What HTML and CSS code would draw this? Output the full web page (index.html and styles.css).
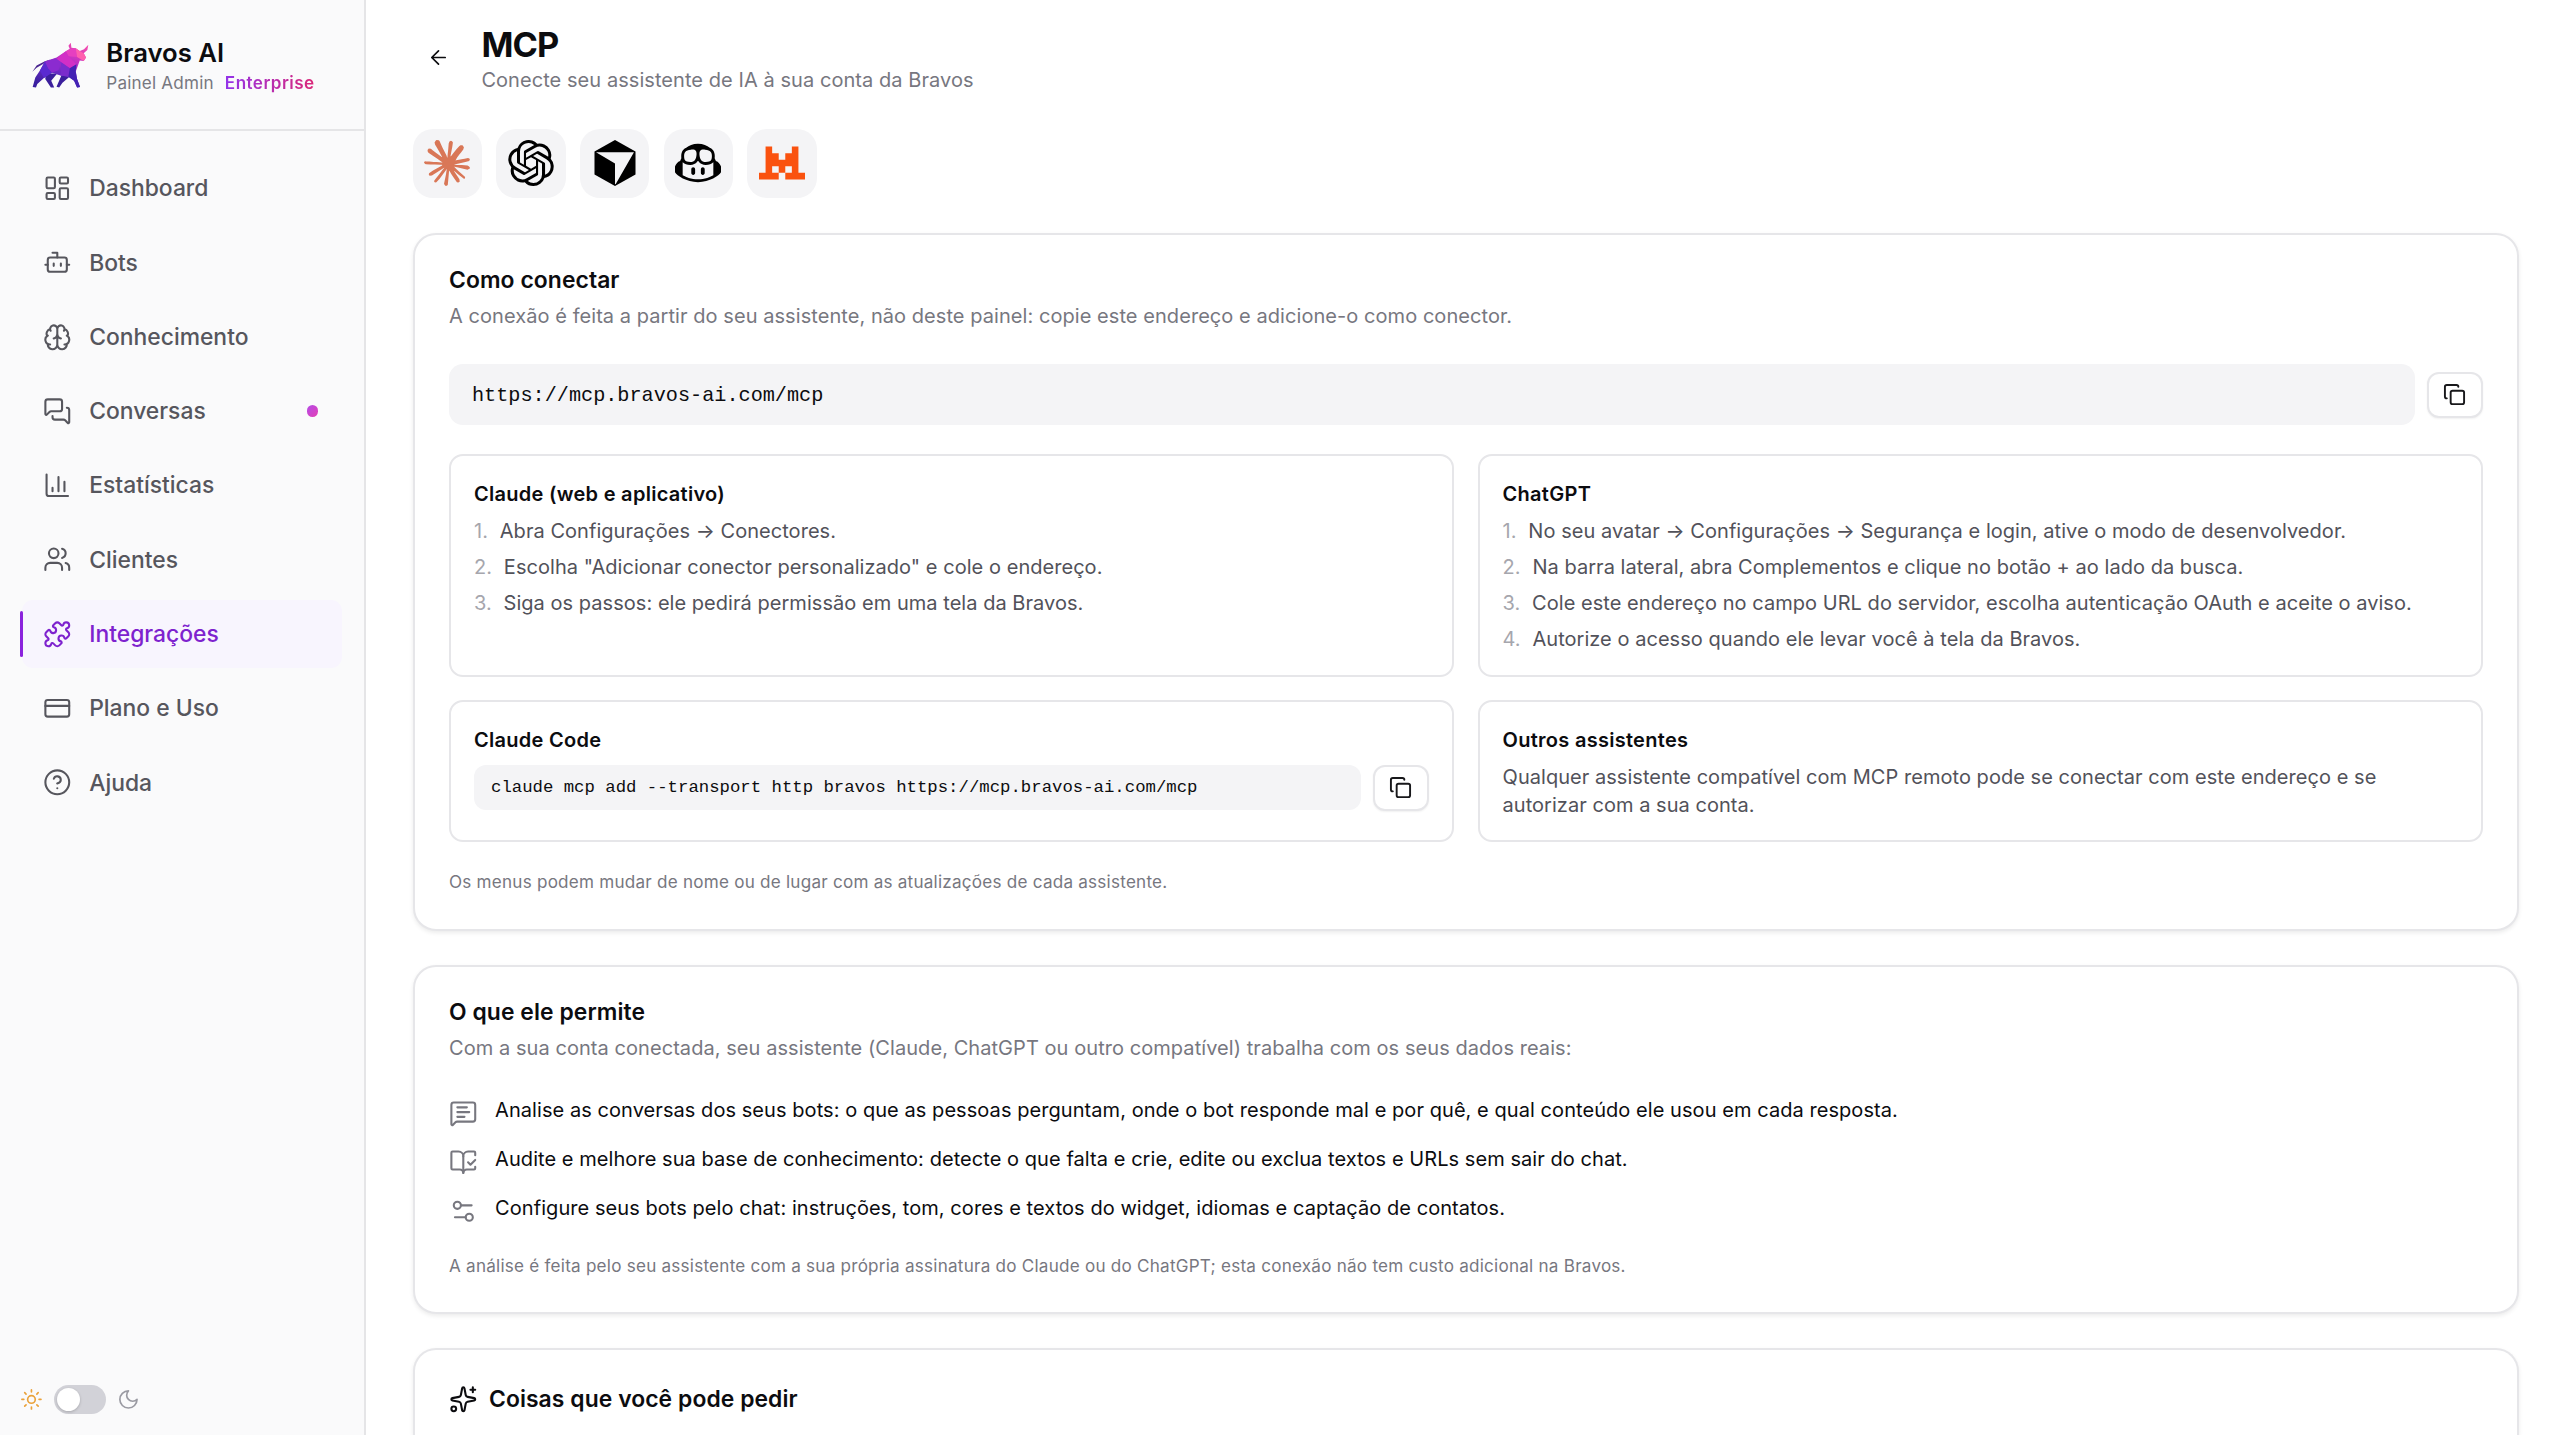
FILE: index.html
```html
<!DOCTYPE html>
<html lang="pt-BR">
<head>
<meta charset="utf-8">
<title>Bravos AI – MCP</title>
<link rel="stylesheet" href="styles.css">
</head>
<body>
<svg class="defs" width="0" height="0" aria-hidden="true">
  <symbol id="copy" viewBox="0 0 24 24"><rect x="8" y="8" width="14" height="14" rx="2"/><path d="M4 16c-1.1 0-2-.9-2-2V4c0-1.1.9-2 2-2h10c1.1 0 2 .9 2 2"/></symbol>
</svg>
<aside class="sidebar">
  <div class="brand">
    <svg class="brand-logo" viewBox="36 33 172 140">
      <defs>
        <linearGradient id="bull" x1="0.75" y1="0" x2="0.3" y2="1"><stop offset="0" stop-color="#f24bb0"/><stop offset=".35" stop-color="#c030c4"/><stop offset=".65" stop-color="#6a2bc4"/><stop offset="1" stop-color="#3a1fa0"/></linearGradient>
      </defs>
      <path fill="#4a2590" d="M37 123 50 104 75 91 92 86 68 100 50 111z"/>
      <path fill="#3b1f9c" d="M78 128 76 145 93 170H103L94 150 112 128zM125 133 110 168 118 170 128 156 150 137z"/>
      <path fill="url(#bull)" d="M75 92 110 80 138 61 150 54 146 44 153 35 155 50 168 52 180 60 193 55 206 41 203 57 192 67 199 80 192 90 180 89 176 100 168 122 172 145 181 169 172 170 163 150 146 138 122 134 96 126 72 142 52 160 48 170 38 169 46 140 58 122z"/>
      <path fill="#e63fc0" d="M138 61 150 54 168 52 172 78 146 76z"/>
      <path fill="#ff5fae" d="M168 52 180 60 192 67 199 80 192 90 172 78z"/>
      <path fill="#d22fc6" d="M138 61 146 76 170 100 150 112 124 94 108 86z"/>
      <path fill="#8b2bd0" d="M75 92 108 82 124 94 116 118 96 126 84 112z"/>
      <path fill="#5a2ad0" d="M75 92 84 112 96 126 72 142 60 120z"/>
      <path fill="#7a2ccc" d="M124 94 150 112 146 138 122 134z"/>
      <path fill="#4322b4" d="M150 112 170 100 168 122 172 145 181 169 172 170 163 150 146 138z"/>
    </svg>
    <div class="brand-text">
      <div class="brand-name">Bravos AI</div>
      <div class="brand-sub"><span>Painel Admin</span><span class="plan">Enterprise</span></div>
    </div>
  </div>
  <nav class="nav">
    <a class="item"><svg class="ico" viewBox="0 0 24 24"><rect width="7" height="9" x="3" y="3" rx="1"/><rect width="7" height="5" x="14" y="3" rx="1"/><rect width="7" height="9" x="14" y="12" rx="1"/><rect width="7" height="5" x="3" y="16" rx="1"/></svg><span>Dashboard</span></a>
    <a class="item"><svg class="ico" viewBox="0 0 24 24"><path d="M12 8V4H8"/><rect width="16" height="12" x="4" y="8" rx="2"/><path d="M2 14h2M20 14h2M15 13v2M9 13v2"/></svg><span>Bots</span></a>
    <a class="item"><svg class="ico" viewBox="0 0 24 24"><path d="M12 18V5M15 13a4.17 4.17 0 0 1-3-4 4.17 4.17 0 0 1-3 4M17.598 6.5A3 3 0 1 0 12 5a3 3 0 1 0-5.598 1.5M17.997 5.125a4 4 0 0 1 2.526 5.77M18 18a4 4 0 0 0 2-7.464M19.967 17.483A4 4 0 1 1 12 18a4 4 0 1 1-7.967-.517M6 18a4 4 0 0 1-2-7.464M6.003 5.125a4 4 0 0 0-2.526 5.77"/></svg><span>Conhecimento</span></a>
    <a class="item"><svg class="ico" viewBox="0 0 24 24"><path d="M16 10a2 2 0 0 1-2 2H6.828a2 2 0 0 0-1.414.586l-2.202 2.202A.71.71 0 0 1 2 14.286V4a2 2 0 0 1 2-2h10a2 2 0 0 1 2 2z"/><path d="M20 9a2 2 0 0 1 2 2v10.286a.71.71 0 0 1-1.212.502l-2.202-2.202A2 2 0 0 0 17.172 19H10a2 2 0 0 1-2-2v-1"/></svg><span>Conversas</span><i class="dot"></i></a>
    <a class="item"><svg class="ico" viewBox="0 0 24 24"><path d="M3 3v16a2 2 0 0 0 2 2h16M18 17V9M13 17V5M8 17v-3"/></svg><span>Estatísticas</span></a>
    <a class="item"><svg class="ico" viewBox="0 0 24 24"><path d="M16 21v-2a4 4 0 0 0-4-4H6a4 4 0 0 0-4 4v2M16 3.128a4 4 0 0 1 0 7.744M22 21v-2a4 4 0 0 0-3-3.87"/><circle cx="9" cy="7" r="4"/></svg><span>Clientes</span></a>
    <a class="item active"><svg class="ico" viewBox="0 0 24 24"><path d="M15.39 4.39a1 1 0 0 0 1.68-.474 2.5 2.5 0 1 1 3.014 3.015 1 1 0 0 0-.474 1.68l1.683 1.682a2.414 2.414 0 0 1 0 3.414L19.61 15.39a1 1 0 0 1-1.68-.474 2.5 2.5 0 1 0-3.014 3.015 1 1 0 0 1 .474 1.68l-1.683 1.682a2.414 2.414 0 0 1-3.414 0L8.61 19.61a1 1 0 0 0-1.68.474 2.5 2.5 0 1 1-3.014-3.015 1 1 0 0 0 .474-1.68l-1.683-1.682a2.414 2.414 0 0 1 0-3.414L4.39 8.61a1 1 0 0 1 1.68.474 2.5 2.5 0 1 0 3.014-3.015 1 1 0 0 1-.474-1.68l1.683-1.682a2.414 2.414 0 0 1 3.414 0z"/></svg><span>Integrações</span></a>
    <a class="item"><svg class="ico" viewBox="0 0 24 24"><rect width="20" height="14" x="2" y="5" rx="2"/><path d="M2 10h20"/></svg><span>Plano e Uso</span></a>
    <a class="item"><svg class="ico" viewBox="0 0 24 24"><circle cx="12" cy="12" r="10"/><path d="M9.09 9a3 3 0 0 1 5.83 1c0 2-3 3-3 3M12 17h.01"/></svg><span>Ajuda</span></a>
  </nav>
  <div class="theme">
    <svg class="ico sun" viewBox="0 0 24 24"><circle cx="12" cy="12" r="4"/><path d="M12 2v2M12 20v2M4.93 4.93l1.41 1.41M17.66 17.66l1.41 1.41M2 12h2M20 12h2M6.34 17.66l-1.41 1.41M19.07 4.93l-1.41 1.41"/></svg>
    <span class="switch"><i></i></span>
    <svg class="ico moon" viewBox="0 0 24 24"><path d="M12 3a6 6 0 0 0 9 9 9 9 0 1 1-9-9Z"/></svg>
  </div>
</aside>
<main class="main">
  <header class="head">
    <span class="back"><svg class="ico" viewBox="0 0 24 24"><path d="m12 19-7-7 7-7M19 12H5"/></svg></span>
    <div>
      <h1>MCP</h1>
      <p>Conecte seu assistente de IA à sua conta da Bravos</p>
    </div>
  </header>
  <div class="tiles">
    <span class="tile"><svg viewBox="0 0 24 24" fill="#d97757"><path d="m4.7144 15.9555 4.7174-2.6471.079-.2307-.079-.1275h-.2307l-.7893-.0486-2.6956-.0729-2.3375-.0971-2.2646-.1214-.5707-.1215-.5343-.7042.0546-.3522.4797-.3218.686.0608 1.5179.1032 2.2767.1578 1.6514.0972 2.4468.255h.3886l.0546-.1579-.1336-.0971-.1032-.0972L6.973 9.8356l-2.55-1.6879-1.3356-.9714-.7225-.4918-.3643-.4614-.1578-1.0078.6557-.7225.8803.0607.2246.0607.8925.686 1.9064 1.4754 2.4893 1.8336.3643.3035.1457-.1032.0182-.0728-.164-.2733-1.3539-2.4467-1.445-2.4893-.6435-1.032-.17-.6194c-.0607-.255-.1032-.4674-.1032-.7285L6.287.1335 6.6997 0l.9957.1336.419.3642.6192 1.4147 1.0018 2.2282 1.5543 3.0296.4553.8985.2429.8318.091.255h.1579v-.1457l.1275-1.706.2368-2.0947.2307-2.6957.0789-.7589.3764-.9107.7468-.4918.5828.2793.4797.686-.0668.4433-.2853 1.8517-.5586 2.9021-.3643 1.9429h.2125l.2429-.2429.9835-1.3053 1.6514-2.0643.7286-.8196.85-.9046.5464-.4311h1.0321l.759 1.1293-.34 1.1657-1.0625 1.3478-.8804 1.1414-1.2628 1.7-.7893 1.36.0729.1093.1882-.0183 2.8535-.607 1.5421-.2794 1.8396-.3157.8318.3886.091.3946-.3278.8075-1.967.4857-2.3072.4614-3.4364.8136-.0425.0304.0486.0607 1.5482.1457.6618.0364h1.621l3.0175.2247.7892.522.4736.6376-.079.4857-1.2142.6193-1.6393-.3886-3.825-.9107-1.3113-.3279h-.1822v.1093l1.0929 1.0686 2.0035 1.8092 2.5075 2.3314.1275.5768-.3218.4554-.34-.0486-2.2039-1.6575-.85-.7468-1.9246-1.621h-.1275v.17l.4432.6496 2.3436 3.5214.1214 1.0807-.17.3521-.6071.2125-.6679-.1214-1.3721-1.9246L14.38 17.959l-1.1414-1.9428-.1397.079-.674 7.2552-.3156.3703-.7286.2793-.6071-.4614-.3218-.7468.3218-1.4753.3886-1.9246.3157-1.53.2853-1.9004.17-.6314-.0121-.0425-.1397.0182-1.4328 1.9672-2.1796 2.9446-1.7243 1.8456-.4128.164-.7164-.3704.0667-.6618.4008-.5889 2.386-3.0357 1.4389-1.882.929-1.0868-.0062-.1579h-.0546l-6.3385 4.1164-1.1293.1457-.4857-.4554.0607-.7467.2307-.2429 1.9064-1.3114Z"/></svg></span>
    <span class="tile"><svg viewBox="0 0 24 24"><path d="M22.2819 9.8211a5.9847 5.9847 0 0 0-.5157-4.9108 6.0462 6.0462 0 0 0-6.5098-2.9A6.0651 6.0651 0 0 0 4.9807 4.1818a5.9847 5.9847 0 0 0-3.9977 2.9 6.0462 6.0462 0 0 0 .7427 7.0966 5.98 5.98 0 0 0 .511 4.9107 6.051 6.051 0 0 0 6.5146 2.9001A5.9847 5.9847 0 0 0 13.2599 24a6.0557 6.0557 0 0 0 5.7718-4.2058 5.9894 5.9894 0 0 0 3.9977-2.9001 6.0557 6.0557 0 0 0-.7475-7.0729zm-9.022 12.6081a4.4755 4.4755 0 0 1-2.8764-1.0408l.1419-.0804 4.7783-2.7582a.7948.7948 0 0 0 .3927-.6813v-6.7369l2.02 1.1686a.071.071 0 0 1 .038.052v5.5826a4.504 4.504 0 0 1-4.4945 4.4944zm-9.6607-4.1254a4.4708 4.4708 0 0 1-.5346-3.0137l.142.0852 4.783 2.7582a.7712.7712 0 0 0 .7806 0l5.8428-3.3685v2.3324a.0804.0804 0 0 1-.0332.0615L9.74 19.9502a4.4992 4.4992 0 0 1-6.1408-1.6464zM2.3408 7.8956a4.485 4.485 0 0 1 2.3655-1.9728V11.6a.7664.7664 0 0 0 .3879.6765l5.8144 3.3543-2.0201 1.1685a.0757.0757 0 0 1-.071 0l-4.8303-2.7865A4.504 4.504 0 0 1 2.3408 7.872zm16.5963 3.8558L13.1038 8.364 15.1192 7.2a.0757.0757 0 0 1 .071 0l4.8303 2.7913a4.4944 4.4944 0 0 1-.6765 8.1042v-5.6772a.79.79 0 0 0-.407-.667zm2.0107-3.0231l-.142-.0852-4.7735-2.7818a.7759.7759 0 0 0-.7854 0L9.409 9.2297V6.8974a.0662.0662 0 0 1 .0284-.0615l4.8303-2.7866a4.4992 4.4992 0 0 1 6.6802 4.66zM8.3065 12.863l-2.02-1.1638a.0804.0804 0 0 1-.038-.0567V6.0742a4.4992 4.4992 0 0 1 7.3757-3.4537l-.142.0805L8.704 5.459a.7948.7948 0 0 0-.3927.6813zm1.0976-2.3654l2.602-1.4998 2.6069 1.4998v2.9994l-2.5974 1.4997-2.6067-1.4997Z"/></svg></span>
    <span class="tile"><svg viewBox="0 0 24 24"><path d="M12 0 22.7 6V18L12 24 1.3 18V6z"/><path fill="#f4f4f6" d="M2.1 6.4H21.9L12.4 22.9Q12 23.3 12 22.7V12.2z"/></svg></span>
    <span class="tile"><svg viewBox="0 0 24 24"><path d="M23.922 16.997C23.061 18.492 18.063 22.02 12 22.02 5.937 22.02.939 18.492.078 16.997A.641.641 0 0 1 0 16.741v-2.869a.883.883 0 0 1 .053-.22c.372-.935 1.347-2.292 2.605-2.656.167-.429.414-1.055.644-1.517a10.098 10.098 0 0 1-.052-1.086c0-1.331.282-2.499 1.132-3.368.397-.406.89-.717 1.474-.952C7.255 2.937 9.248 1.98 11.978 1.98c2.731 0 4.767.957 6.166 2.093.584.235 1.077.546 1.474.952.85.869 1.132 2.037 1.132 3.368 0 .368-.014.733-.052 1.086.23.462.477 1.088.644 1.517 1.258.364 2.233 1.721 2.605 2.656a.841.841 0 0 1 .053.22v2.869a.641.641 0 0 1-.078.256Zm-11.75-5.992h-.344a4.359 4.359 0 0 1-.355.508c-.77.947-1.918 1.492-3.508 1.492-1.725 0-2.989-.359-3.782-1.259a2.137 2.137 0 0 1-.085-.104L4 11.746v6.585c1.435.779 4.514 2.179 8 2.179 3.486 0 6.565-1.4 8-2.179v-6.585l-.098-.104s-.033.045-.085.104c-.793.9-2.057 1.259-3.782 1.259-1.59 0-2.738-.545-3.508-1.492a4.359 4.359 0 0 1-.355-.508Zm2.328 3.25c.549 0 1 .451 1 1v2c0 .549-.451 1-1 1-.549 0-1-.451-1-1v-2c0-.549.451-1 1-1Zm-5 0c.549 0 1 .451 1 1v2c0 .549-.451 1-1 1-.549 0-1-.451-1-1v-2c0-.549.451-1 1-1Zm3.313-6.185c.136 1.057.403 1.913.878 2.497.442.544 1.134.938 2.344.938 1.573 0 2.292-.337 2.657-.751.384-.435.558-1.15.558-2.361 0-1.14-.243-1.847-.705-2.319-.477-.488-1.319-.862-2.824-1.025-1.487-.161-2.192.138-2.533.529-.269.307-.437.808-.438 1.578v.021c0 .265.021.562.063.893Zm-1.626 0c.042-.331.063-.628.063-.894v-.02c-.001-.77-.169-1.271-.438-1.578-.341-.391-1.046-.69-2.533-.529-1.505.163-2.347.537-2.824 1.025-.462.472-.705 1.179-.705 2.319 0 1.211.175 1.926.558 2.361.365.414 1.084.751 2.657.751 1.21 0 1.902-.394 2.344-.938.475-.584.742-1.44.878-2.497Z"/></svg></span>
    <span class="tile"><svg viewBox="0 0 24 24" fill="#fa520f"><path d="M3.43 3.43h3.43v3.43h3.43v3.43h3.42V6.86h3.43V3.43h3.43v13.71H24v3.43H13.71v-3.43h3.43v-3.43h-3.43v3.43h-3.42v-3.43H6.86v3.43h3.43v3.43H0v-3.43h3.43z"/></svg></span>
  </div>

  <section class="card">
    <h2>Como conectar</h2>
    <p class="desc">A conexão é feita a partir do seu assistente, não deste painel: copie este endereço e adicione-o como conector.</p>
    <div class="copy-row">
      <code class="url">https://mcp.bravos-ai.com/mcp</code>
      <button class="copy"><svg class="ico"><use href="#copy"/></svg></button>
    </div>
    <div class="grid">
      <div class="box">
        <h3>Claude (web e aplicativo)</h3>
        <ol>
          <li><b>1.</b><span>Abra Configurações → Conectores.</span></li>
          <li><b>2.</b><span>Escolha "Adicionar conector personalizado" e cole o endereço.</span></li>
          <li><b>3.</b><span>Siga os passos: ele pedirá permissão em uma tela da Bravos.</span></li>
        </ol>
      </div>
      <div class="box">
        <h3>ChatGPT</h3>
        <ol>
          <li><b>1.</b><span>No seu avatar → Configurações → Segurança e login, ative o modo de desenvolvedor.</span></li>
          <li><b>2.</b><span>Na barra lateral, abra Complementos e clique no botão + ao lado da busca.</span></li>
          <li><b>3.</b><span>Cole este endereço no campo URL do servidor, escolha autenticação OAuth e aceite o aviso.</span></li>
          <li><b>4.</b><span>Autorize o acesso quando ele levar você à tela da Bravos.</span></li>
        </ol>
      </div>
      <div class="box">
        <h3>Claude Code</h3>
        <div class="copy-row small">
          <code class="cmd">claude mcp add --transport http bravos https://mcp.bravos-ai.com/mcp</code>
          <button class="copy"><svg class="ico"><use href="#copy"/></svg></button>
        </div>
      </div>
      <div class="box">
        <h3>Outros assistentes</h3>
        <p class="text">Qualquer assistente compatível com MCP remoto pode se conectar com este endereço e se autorizar com a sua conta.</p>
      </div>
    </div>
    <p class="note">Os menus podem mudar de nome ou de lugar com as atualizações de cada assistente.</p>
  </section>

  <section class="card">
    <h2>O que ele permite</h2>
    <p class="desc">Com a sua conta conectada, seu assistente (Claude, ChatGPT ou outro compatível) trabalha com os seus dados reais:</p>
    <ul class="features">
      <li><svg class="ico" viewBox="0 0 24 24"><path d="M22 17a2 2 0 0 1-2 2H6.828a2 2 0 0 0-1.414.586l-2.202 2.202A.71.71 0 0 1 2 21.286V5a2 2 0 0 1 2-2h16a2 2 0 0 1 2 2zM7 11h10M7 15h6M7 7h8"/></svg><span>Analise as conversas dos seus bots: o que as pessoas perguntam, onde o bot responde mal e por quê, e qual conteúdo ele usou em cada resposta.</span></li>
      <li><svg class="ico" viewBox="0 0 24 24"><path d="M12 21V7M16 12l2 2 4-4"/><path d="M22 6V4a1 1 0 0 0-1-1h-5a4 4 0 0 0-4 4 4 4 0 0 0-4-4H3a1 1 0 0 0-1 1v13a1 1 0 0 0 1 1h6a3 3 0 0 1 3 3 3 3 0 0 1 3-3h6a1 1 0 0 0 1-1v-1.3"/></svg><span>Audite e melhore sua base de conhecimento: detecte o que falta e crie, edite ou exclua textos e URLs sem sair do chat.</span></li>
      <li><svg class="ico" viewBox="0 0 24 24"><path d="M14 17H5M19 7h-9"/><circle cx="17" cy="17" r="3"/><circle cx="7" cy="7" r="3"/></svg><span>Configure seus bots pelo chat: instruções, tom, cores e textos do widget, idiomas e captação de contatos.</span></li>
    </ul>
    <p class="note">A análise é feita pelo seu assistente com a sua própria assinatura do Claude ou do ChatGPT; esta conexão não tem custo adicional na Bravos.</p>
  </section>

  <section class="card last">
    <h2 class="with-icon"><svg class="ico" viewBox="0 0 24 24"><path d="M11.017 2.814a1 1 0 0 1 1.966 0l1.051 5.558a2 2 0 0 0 1.594 1.594l5.558 1.051a1 1 0 0 1 0 1.966l-5.558 1.051a2 2 0 0 0-1.594 1.594l-1.051 5.558a1 1 0 0 1-1.966 0l-1.051-5.558a2 2 0 0 0-1.594-1.594l-5.558-1.051a1 1 0 0 1 0-1.966l5.558-1.051a2 2 0 0 0 1.594-1.594zM20 2v4M22 4h-4"/><circle cx="4" cy="20" r="2"/></svg><span>Coisas que você pode pedir</span></h2>
  </section>
</main>
</body>
</html>
```
FILE: styles.css
```css
* { box-sizing: border-box; margin: 0; padding: 0; }
html, body { height: 1435px; overflow: hidden; }
body {
  display: flex;
  font-family: Inter, sans-serif;
  font-size: 20px;
  color: #0c0c0f;
  background: #fff;
}
.defs { position: absolute; }
.ico {
  flex: none;
  width: 28.6px;
  height: 28.6px;
  fill: none;
  stroke: currentColor;
  stroke-width: 1.75;
  stroke-linecap: round;
  stroke-linejoin: round;
}

/* Sidebar */
.sidebar {
  flex: none;
  display: flex;
  flex-direction: column;
  width: 366px;
  height: 1435px;
  background: #fafafb;
  border-right: 2px solid #e5e5e7;
}
.brand {
  display: flex;
  align-items: center;
  gap: 17.3px;
  height: 131px;
  padding: 2px 0 0 32px;
  border-bottom: 2px solid #e5e5e7;
}
.brand-logo { width: 57px; height: 46.4px; }
.brand-name { font-size: 25.7px; font-weight: 600; line-height: 34px; }
.brand-sub {
  display: flex;
  gap: 11px;
  font-size: 17.1px;
  line-height: 26px;
  letter-spacing: .2px;
  color: #77777f;
}
.plan {
  font-weight: 600;
  letter-spacing: .45px;
  color: transparent;
  background: linear-gradient(90deg, #9333ea, #db2777);
  background-clip: text;
}
.nav {
  flex: 1;
  display: flex;
  flex-direction: column;
  gap: 5.7px;
  padding: 23px 22px 0 22px;
}
.item {
  position: relative;
  display: flex;
  align-items: center;
  gap: 18px;
  height: 68.6px;
  padding: 0 24px 0 20.6px;
  border-radius: 11px;
  font-size: 22.86px;
  font-weight: 500;
  color: #56565d;
}
.item.active { color: #7e22ce; background: #f8f5fe; }
.item.active::before {
  content: "";
  position: absolute;
  left: -2.5px;
  top: 11px;
  width: 3.5px;
  height: 46px;
  border-radius: 2px;
  background: #8b22dd;
}
.dot {
  width: 11.4px;
  height: 11.4px;
  margin-left: auto;
  border-radius: 50%;
  background: linear-gradient(135deg, #b44be8, #e43fb4);
}
.theme {
  display: flex;
  align-items: center;
  gap: 11.3px;
  padding: 0 0 21.5px 20.2px;
}
.theme .ico { width: 22.9px; height: 22.9px; }
.sun { color: #eaa23c; }
.moon { color: #9a9aa2; }
.switch {
  width: 51.4px;
  height: 28.6px;
  padding: 2.8px;
  border-radius: 15px;
  background: #d2d2d8;
}
.switch i {
  display: block;
  width: 23px;
  height: 23px;
  border-radius: 50%;
  background: #fff;
  box-shadow: 0 1px 3px rgba(0, 0, 0, .2);
}

/* Main column */
.main {
  flex: 1;
  display: flex;
  flex-direction: column;
  height: 1435px;
  padding: 22.7px 41px 0 46.5px;
}
.head { display: flex; align-items: center; gap: 17.4px; }
.back {
  display: flex;
  align-items: center;
  justify-content: center;
  width: 51.5px;
  height: 54px;
  padding-bottom: 3px;
}
.back .ico { width: 23px; height: 23px; }
h1 { font-size: 34.3px; line-height: 43px; font-weight: 700; letter-spacing: -.86px; }
.head p, .desc { font-size: 20px; line-height: 29px; letter-spacing: .06px; color: #77777f; }
.head p { margin-top: .6px; }
.tiles { display: flex; gap: 14.3px; margin: 33.4px 0 34.6px; }
.tile {
  display: flex;
  align-items: center;
  justify-content: center;
  width: 69.4px;
  height: 69.4px;
  border-radius: 20px;
  background: #f4f4f6;
}
.tile svg { width: 46px; height: 46px; }

.card {
  flex: none;
  margin-bottom: 34px;
  padding: 31.1px 34.5px 33.5px;
  border: 2px solid #e6e6e9;
  border-radius: 23px;
  background: #fff;
  box-shadow: 0 2px 4px rgba(0, 0, 0, .08);
}
.card.last {
  flex: 1;
  margin-bottom: 0;
  padding: 34.5px 34.5px 0;
  border-bottom: 0;
  border-radius: 23px 23px 0 0;
}
h2 { font-size: 22.86px; line-height: 28px; font-weight: 600; letter-spacing: .08px; }
.with-icon { display: flex; align-items: center; gap: 11.4px; }
.desc { margin-top: 8.2px; }
.copy-row { display: flex; align-items: center; gap: 11.5px; margin: 33.4px 0 29.4px; }
code {
  flex: 1;
  font-family: "Liberation Mono", monospace;
  background: #f4f4f6;
}
.url { height: 60.5px; padding: 0 23px; border-radius: 14px; font-size: 20.2px; line-height: 63px; }
.copy {
  display: flex;
  align-items: center;
  justify-content: center;
  width: 56px;
  height: 46px;
  border: 2px solid #e6e6e9;
  border-radius: 12px;
  background: #fff;
  color: #18181b;
  box-shadow: 0 1px 2px rgba(0, 0, 0, .06);
}
.copy .ico { width: 23px; height: 23px; stroke-width: 2; }
.grid { display: grid; grid-template-columns: 1fr 1fr; gap: 23.6px; }
.box { padding: 23.5px 23px 20.6px; border: 2px solid #e6e6e9; border-radius: 14px; }
h3 { font-size: 20px; line-height: 28px; font-weight: 600; letter-spacing: .28px; }
ol { display: flex; flex-direction: column; gap: 8.3px; margin-top: 10.5px; list-style: none; }
li { display: flex; }
ol li, .text { gap: 11.8px; line-height: 27.7px; letter-spacing: .04px; color: #52525a; }
ol b { font-weight: 400; color: #a6a6ad; }
.text { margin-top: 10.5px; }
.copy-row.small { margin: 11px 0 0; }
.cmd {
  height: 44.7px;
  padding: 0 17px;
  border-radius: 12px;
  font-size: 17.32px;
  line-height: 46px;
}
.note { margin-top: 28.3px; font-size: 17.1px; line-height: 24.6px; letter-spacing: .23px; color: #77777f; }
.features { display: flex; flex-direction: column; gap: 17px; margin-top: 33px; list-style: none; }
.features li { gap: 17.5px; line-height: 28.8px; letter-spacing: .06px; }
.features .ico { margin-top: 3.4px; color: #77777f; }
```
